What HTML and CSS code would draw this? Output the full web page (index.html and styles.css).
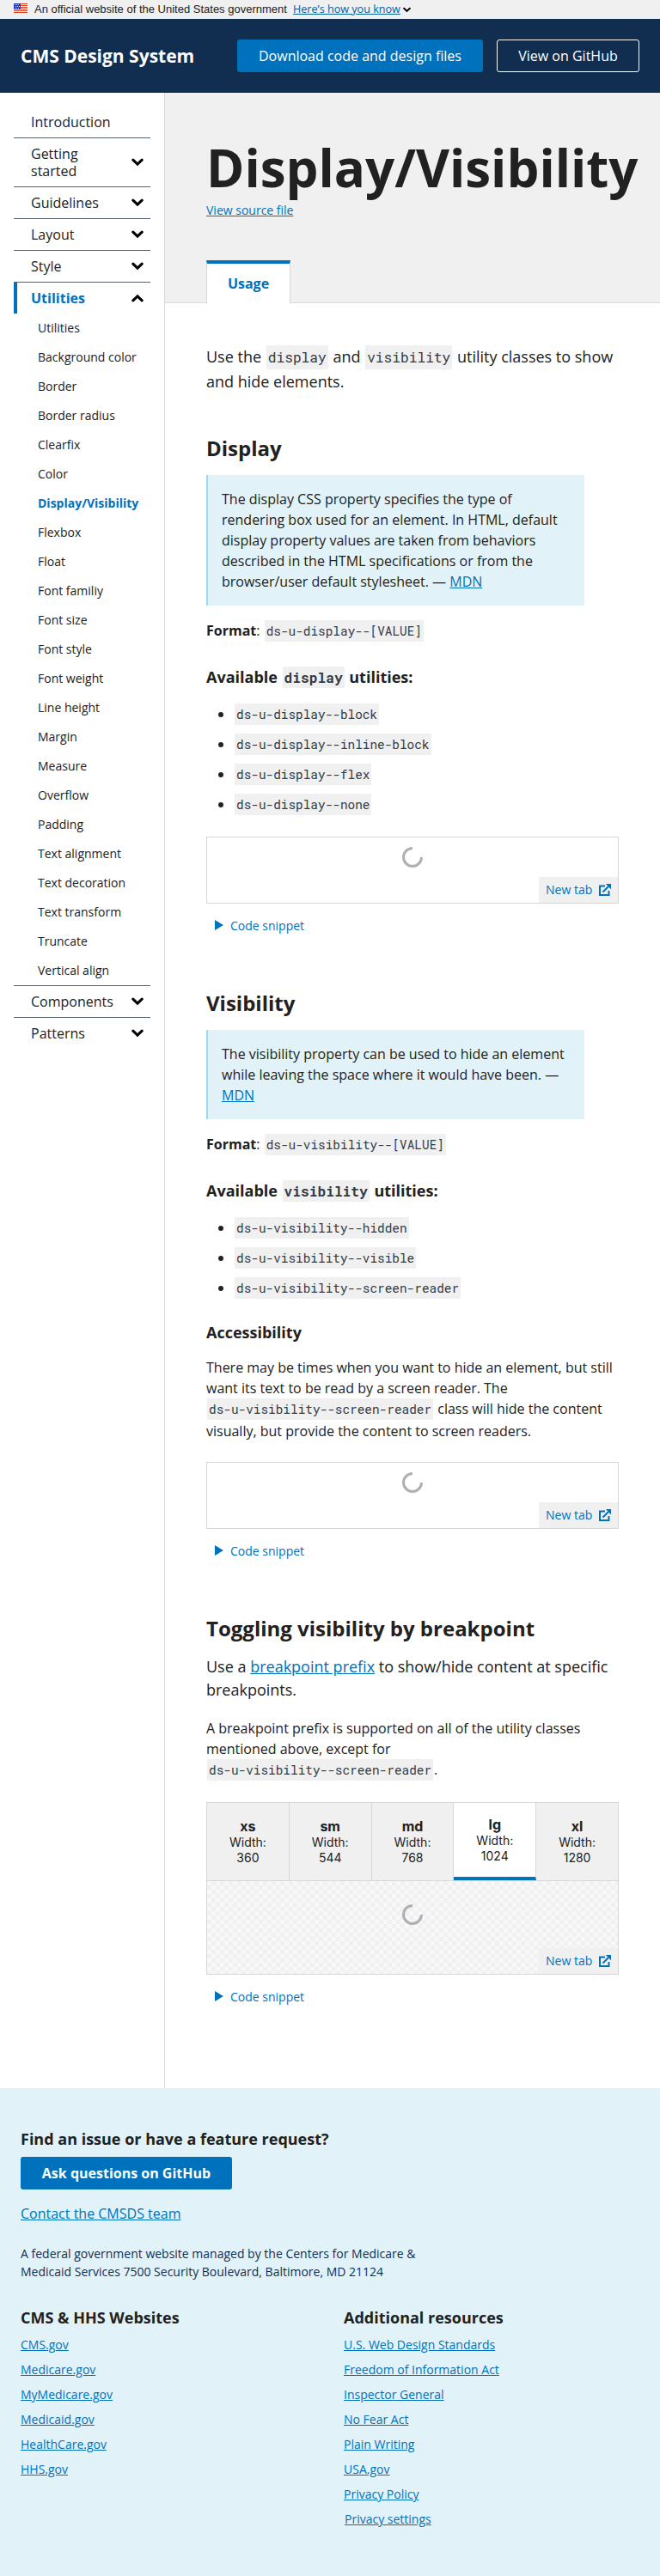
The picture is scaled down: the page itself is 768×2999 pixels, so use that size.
FILE: index.html
```html
<!DOCTYPE html>
<html lang="en">
<head>
<meta charset="utf-8">
<title>Display/Visibility - CMS Design System</title>
<link rel="stylesheet" href="styles.css">
</head>
<body>
<svg class="defs" width="0" height="0" aria-hidden="true">
  <symbol id="chev" viewBox="0 0 14 10"><path d="M1.800 2.200L7 7.200L12.200 2.200" fill="none" stroke="#000" stroke-width="3.100" stroke-linecap="round"/></symbol>
  <symbol id="spin" viewBox="0 0 24 24"><path d="M12 1.500A10.500 10.500 0 1 0 22.500 12" fill="none" stroke="#aeb0b5" stroke-width="3"/></symbol>
  <symbol id="ext" viewBox="0 0 14 14"><path d="M7 2.500H1V13H11.500V8" fill="none" stroke="#0071bc" stroke-width="2"/><path d="M4.500 9.500L11 3" fill="none" stroke="#0071bc" stroke-width="2"/><path d="M7.800 0H14V6.200z" fill="#0071bc"/></symbol>
</svg>
<div class="banner">
  <svg class="flag" width="16" height="11" viewBox="0 0 16 11"><path fill="#fff" d="M0 0h16v11H0z"/><path fill="#db3e1f" d="M0 0h16v1H0zM0 2h16v1H0zM0 4h16v1H0zM0 6h16v1H0zM0 8h16v1H0zM0 10h16v1H0z"/><path fill="#1e33b1" d="M0 0h8v7H0z"/><path fill="#fff" d="M1 1h1v1H1zM3 1h1v1H3zM5 1h1v1H5zM2 3h1v1H2zM4 3h1v1H4zM6 3h1v1H6zM1 5h1v1H1zM3 5h1v1H3zM5 5h1v1H5z"/></svg>
  <span class="official">An official website of the United States government</span>
  <a class="know" href="#">Here’s how you know</a>
  <svg class="know-chev" width="9" height="7"><use href="#chev"/></svg>
</div>
<header class="top">
  <span class="brand">CMS Design System</span>
  <a class="btn primary" href="#">Download code and design files</a>
  <a class="btn ghost" href="#">View on GitHub</a>
</header>
<div class="layout">
  <nav class="side">
    <a class="item" href="#"><span>Introduction</span></a>
    <a class="item" href="#"><span>Getting<br>started</span><svg class="chev"><use href="#chev"/></svg></a>
    <a class="item" href="#"><span>Guidelines</span><svg class="chev"><use href="#chev"/></svg></a>
    <a class="item" href="#"><span>Layout</span><svg class="chev"><use href="#chev"/></svg></a>
    <a class="item" href="#"><span>Style</span><svg class="chev"><use href="#chev"/></svg></a>
    <a class="item current" href="#"><span>Utilities</span><svg class="chev up"><use href="#chev"/></svg></a>
    <ul class="sub">
      <li>Utilities</li><li>Background color</li><li>Border</li><li>Border radius</li><li>Clearfix</li><li>Color</li><li class="on">Display/Visibility</li><li>Flexbox</li><li>Float</li><li>Font familiy</li><li>Font size</li><li>Font style</li><li>Font weight</li><li>Line height</li><li>Margin</li><li>Measure</li><li>Overflow</li><li>Padding</li><li>Text alignment</li><li>Text decoration</li><li>Text transform</li><li>Truncate</li><li>Vertical align</li>
    </ul>
    <a class="item lined" href="#"><span>Components</span><svg class="chev"><use href="#chev"/></svg></a>
    <a class="item last" href="#"><span>Patterns</span><svg class="chev"><use href="#chev"/></svg></a>
  </nav>
  <main class="main">
    <div class="hero">
      <h1>Display/Visibility</h1>
      <a class="source" href="#">View source file</a>
      <div class="tabs"><span class="tab">Usage</span></div>
    </div>
    <div class="content">
      <p class="lead first">Use the <code>display</code> and <code>visibility</code> utility classes to show and hide elements.</p>

      <h2>Display</h2>
      <blockquote>The display CSS property specifies the type of rendering box used for an element. In HTML, default display property values are taken from behaviors described in the HTML specifications or from the browser/user default stylesheet. — <a href="#">MDN</a></blockquote>
      <p class="format"><b>Format</b>: <code>ds-u-display--[VALUE]</code></p>
      <h3>Available <code>display</code> utilities:</h3>
      <ul class="list">
        <li><code>ds-u-display--block</code></li>
        <li><code>ds-u-display--inline-block</code></li>
        <li><code>ds-u-display--flex</code></li>
        <li><code>ds-u-display--none</code></li>
      </ul>
      <div class="example"><svg class="spinner"><use href="#spin"/></svg><a class="newtab" href="#">New tab<svg class="ext"><use href="#ext"/></svg></a></div>
      <div class="snippet"><svg width="10" height="12"><path d="M0 0L10 6L0 12z"/></svg>Code snippet</div>

      <h2>Visibility</h2>
      <blockquote>The visibility property can be used to hide an element while leaving the space where it would have been. — <a href="#">MDN</a></blockquote>
      <p class="format"><b>Format</b>: <code>ds-u-visibility--[VALUE]</code></p>
      <h3>Available <code>visibility</code> utilities:</h3>
      <ul class="list">
        <li><code>ds-u-visibility--hidden</code></li>
        <li><code>ds-u-visibility--visible</code></li>
        <li><code>ds-u-visibility--screen-reader</code></li>
      </ul>
      <h3 class="plain">Accessibility</h3>
      <p class="body">There may be times when you want to hide an element, but still want its text to be read by a screen reader. The <code>ds-u-visibility--screen-reader</code> class will hide the content visually, but provide the content to screen readers.</p>
      <div class="example"><svg class="spinner"><use href="#spin"/></svg><a class="newtab" href="#">New tab<svg class="ext"><use href="#ext"/></svg></a></div>
      <div class="snippet"><svg width="10" height="12"><path d="M0 0L10 6L0 12z"/></svg>Code snippet</div>

      <h2>Toggling visibility by breakpoint</h2>
      <p class="lead second">Use a <a href="#">breakpoint prefix</a> to show/hide content at specific breakpoints.</p>
      <p class="body after">A breakpoint prefix is supported on all of the utility classes mentioned above, except for <code>ds-u-visibility--screen-reader</code>.</p>
      <div class="bps">
        <div class="bp"><b>xs</b><span>Width:</span><span>360</span></div>
        <div class="bp"><b>sm</b><span>Width:</span><span>544</span></div>
        <div class="bp"><b>md</b><span>Width:</span><span>768</span></div>
        <div class="bp sel"><b>lg</b><span>Width:</span><span>1024</span></div>
        <div class="bp"><b>xl</b><span>Width:</span><span>1280</span></div>
      </div>
      <div class="example checker"><svg class="spinner"><use href="#spin"/></svg><a class="newtab" href="#">New tab<svg class="ext"><use href="#ext"/></svg></a></div>
      <div class="snippet"><svg width="10" height="12"><path d="M0 0L10 6L0 12z"/></svg>Code snippet</div>
    </div>
  </main>
</div>
<footer class="foot">
  <h4>Find an issue or have a feature request?</h4>
  <a class="btn primary ask" href="#">Ask questions on GitHub</a>
  <a class="contact" href="#">Contact the CMSDS team</a>
  <p class="address">A federal government website managed by the Centers for Medicare &amp; Medicaid Services 7500 Security Boulevard, Baltimore, MD 21124</p>
  <div class="cols">
    <div class="col"><h4>CMS &amp; HHS Websites</h4><a href="#">CMS.gov</a><a href="#">Medicare.gov</a><a href="#">MyMedicare.gov</a><a href="#">Medicaid.gov</a><a href="#">HealthCare.gov</a><a href="#">HHS.gov</a></div>
    <div class="col"><h4>Additional resources</h4><a href="#">U.S. Web Design Standards</a><a href="#">Freedom of Information Act</a><a href="#">Inspector General</a><a href="#">No Fear Act</a><a href="#">Plain Writing</a><a href="#">USA.gov</a><a href="#">Privacy Policy</a><a class="settings" href="#">Privacy settings</a></div>
  </div>
</footer>
</body>
</html>
```
FILE: styles.css
```css
* { box-sizing: border-box; }
body { margin: 0; font: 16px/24px "Open Sans", sans-serif; color: #212121; background: #fff; }
h1, h2, h3, h4, p, ul, blockquote { margin: 0; padding: 0; }
a { color: #0071bc; }
.defs { display: block; height: 0; }

.banner { height: 22px; background: #f0f0f0; display: flex; align-items: center; padding-left: 16px; font: 13px/22px "Liberation Sans", Arial, sans-serif; }
.flag { margin: 0 8px 3px 0; }
.official { width: 293px; white-space: nowrap; }
.know { margin-left: 8px; width: 126px; white-space: nowrap; font-family: "Open Sans", sans-serif; font-size: 12.6px; color: #0062a3; }
.know-chev { margin-left: 2px; }

.top { height: 86px; background: #112e51; display: flex; align-items: center; padding: 0 24px; }
.brand { color: #fff; font-size: 21px; font-weight: 700; margin-right: auto; white-space: nowrap; }
.btn { display: flex; align-items: center; justify-content: center; height: 38px; border-radius: 3px; color: #fff; text-decoration: none; white-space: nowrap; }
.primary { background: #0071bc; width: 286px; }
.ghost { border: 1px solid #fff; width: 166px; margin-left: 16px; }

.layout { display: flex; height: 2323px; }
.side { width: 192px; border-right: 1px solid #d6d7d9; padding: 16px 16px 0; flex: none; }
.item { display: flex; align-items: center; justify-content: space-between; padding: 8px 8px 8px 20px; line-height: 20px; border-bottom: 1px solid #5b616b; color: #212121; text-decoration: none; }
.chev { width: 14px; height: 10px; flex: none; }
.up { transform: rotate(180deg); }
.current { color: #0071bc; font-weight: 700; border-bottom: 0; border-left: 4px solid #0071bc; padding-left: 16px; }
.sub { list-style: none; }
.sub li { height: 34px; line-height: 34px; padding-left: 28px; font-size: 14px; white-space: nowrap; }
.sub .on { color: #0071bc; font-weight: 700; }
.lined { border-top: 1px solid #5b616b; }
.last { border-bottom: 0; }

.main { flex: 1; min-width: 0; }
.hero { height: 245px; background: #f0f0f0; border-bottom: 1px solid #d6d7d9; padding: 48px 0 0 48px; display: flex; flex-direction: column; align-items: flex-start; }
h1 { font-size: 60px; line-height: 78px; white-space: nowrap; }
.source { margin-top: 2px; font-size: 14px; line-height: 18px; }
.tabs { margin-top: auto; margin-bottom: -1px; }
.tab { display: flex; align-items: center; justify-content: center; width: 98px; height: 50px; background: #fff; border: 1px solid #d6d7d9; border-top: 4px solid #0071bc; border-bottom: 0; color: #0071bc; font-weight: 700; }

.content { padding: 49px 48px 0; }
code { display: inline-block; font-family: "Roboto Mono", "Liberation Mono", monospace; font-size: 14.4px; line-height: 19px; padding: 3px 2px; margin: 0 1px 1px; background: #f0f0f0; color: #323a45; }
.lead { font-size: 18px; line-height: 27px; }
.lead code { font-size: 16.2px; line-height: 22px; }
.first { height: 90px; }
h2 { font-size: 24px; line-height: 31px; }
.first + h2 { margin-top: 14px; }
.snippet + h2 { margin-top: 64px; }
blockquote { width: 440px; margin-top: 16px; padding: 16px; border-left: 2px solid #9bdaf1; background: #e1f3f8; }
.format { margin-top: 17px; height: 25px; }
h3 { font-size: 18px; line-height: 25px; height: 25px; margin-top: 29px; }
h3 code { font-size: 16.2px; line-height: 19px; }
.list { list-style: none; margin-top: 18px; }
.list li { display: flex; align-items: center; height: 25px; margin-bottom: 10px; padding-left: 14px; }
.list li::before { content: ""; width: 6px; height: 6px; border-radius: 50%; background: #212121; margin-right: 12px; }
.list code { margin-bottom: 0; }
.list + .example { margin-top: 25px; }
.plain { margin-top: 27px; }
.body { margin-top: 16px; }
.example { position: relative; height: 78px; border: 1px solid #d6d7d9; }
.body + .example { margin-top: 24px; }
.spinner { display: block; width: 24px; height: 24px; margin: 11px auto 0; }
.newtab { position: absolute; right: 0; bottom: 0; width: 92px; height: 30px; padding: 0 8px; display: flex; align-items: center; justify-content: space-between; background: #f0f0f0; font-size: 14px; text-decoration: none; }
.ext { width: 14px; height: 14px; }
.snippet { display: flex; align-items: center; height: 21px; margin-top: 15px; padding-left: 10px; color: #0071bc; font-size: 14px; }
.snippet svg { fill: #0071bc; margin: 0 8px 2px 0; }
.second { margin-top: 16px; }
.after { margin-top: 19px; }
.bps { display: flex; height: 91px; margin-top: 24px; border: 1px solid #d6d7d9; border-bottom: 0; }
.bp { flex: 1; display: flex; flex-direction: column; align-items: center; justify-content: center; background: #f0f0f0; border-right: 1px solid #d6d7d9; font: 14px/18px Inter, sans-serif; }
.bp b { font-size: 16px; line-height: 19px; }
.bp:last-child { border-right: 0; }
.sel { background: #fff; border-bottom: 4px solid #0071bc; }
.checker { height: 110px; background: repeating-conic-gradient(#f0f0f0 0 25%, #f8f8f8 0 50%) 0 0 / 10px 10px; }
.checker .spinner { margin-top: 27px; }

.foot { height: 568px; background: #e1f3f8; padding: 46px 24px 0; }
h4 { font-size: 18px; line-height: 27px; }
.ask { width: 246px; margin-top: 7px; font-weight: 700; }
.contact { display: block; width: max-content; margin-top: 16px; }
.address { margin-top: 24px; width: 480px; font-size: 14px; line-height: 21px; color: #112e51; }
.cols { display: flex; margin-top: 30px; }
.col { flex: none; width: 376px; display: flex; flex-direction: column; align-items: flex-start; font-size: 14px; }
.col + .col { width: 344px; }
.col a { line-height: 21px; margin-bottom: 8px; }
.col h4 { margin-bottom: 7px; }
.col .settings { margin-left: 1px; }
```
